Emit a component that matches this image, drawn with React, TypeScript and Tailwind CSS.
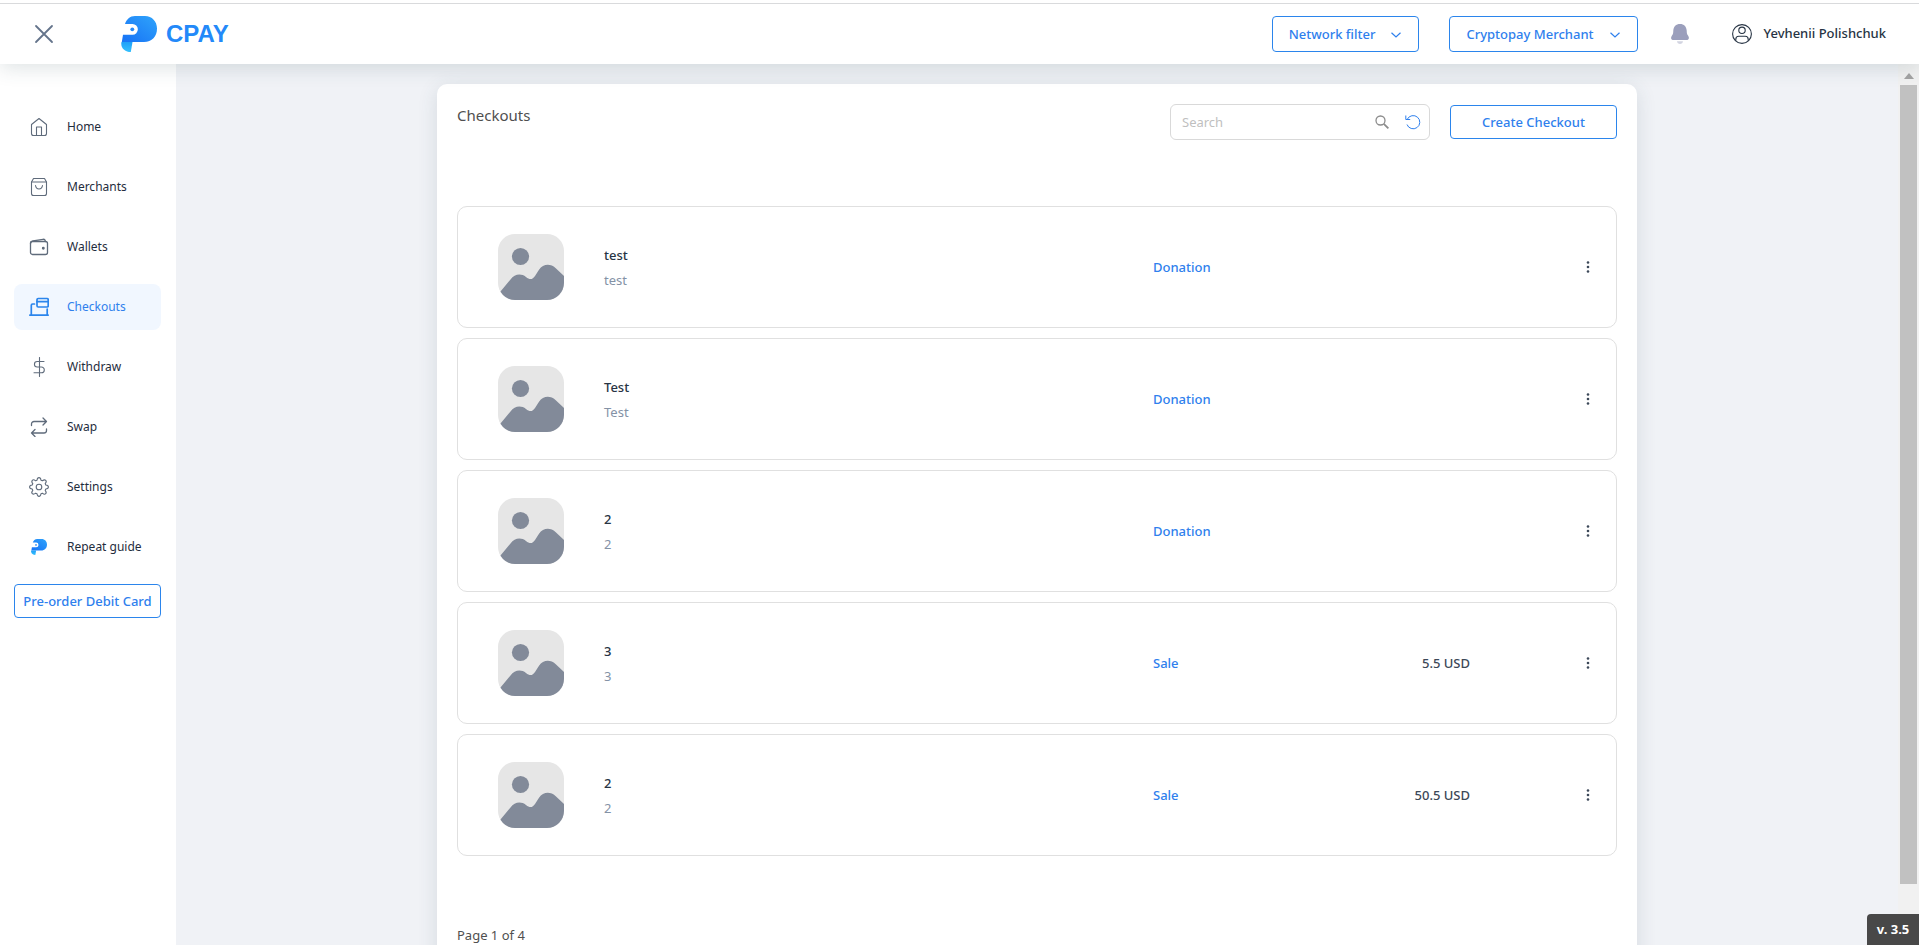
import type { ReactNode } from "react";

const checkouts = [
  { title: "test", description: "test", type: "Donation", price: "" },
  { title: "Test", description: "Test", type: "Donation", price: "" },
  { title: "2", description: "2", type: "Donation", price: "" },
  { title: "3", description: "3", type: "Sale", price: "5.5 USD" },
  { title: "2", description: "2", type: "Sale", price: "50.5 USD" },
];

function LineIcon({ children, width = 1.1 }: { children: ReactNode; width?: number }) {
  return (
    <svg
      className="size-5 shrink-0"
      viewBox="0 0 20 20"
      fill="none"
      stroke="currentColor"
      strokeWidth={width}
      strokeLinecap="round"
      strokeLinejoin="round"
      aria-hidden="true"
    >
      {children}
    </svg>
  );
}

function HomeIcon() {
  return (
    <LineIcon>
      <path d="M2.500 7.500 10 1.500 17.500 7.500v9a2 2 0 0 1-2 2h-11a2 2 0 0 1-2-2z" />
      <path d="M7.500 18.500v-8.500h5v8.500" />
    </LineIcon>
  );
}

function BagIcon() {
  return (
    <LineIcon>
      <path d="M2.500 5 4.500 1.500h11L17.500 5v11.500a2 2 0 0 1-2 2h-11a2 2 0 0 1-2-2z" />
      <path d="M2.500 5h15M6.500 8.500c.4 2.400 1.700 3.500 3.500 3.500s3.100-1.100 3.500-3.500" />
    </LineIcon>
  );
}

function WalletIcon() {
  return (
    <LineIcon width={1.3}>
      <rect x="1.500" y="4.500" width="17" height="13" rx="2" />
      <path d="M1.500 6.500c0-2 .8-2.400 2.500-2.700l10-1.500c1.300-.2 2 .3 2.200 1.400l.1.800" />
      <circle cx="14.300" cy="11.300" r=".8" fill="currentColor" />
    </LineIcon>
  );
}

function CheckoutIcon() {
  return (
    <LineIcon width={1.7}>
      <path d="M.8 18.200h18.400M2.300 18V8.300a1.300 1.300 0 0 1 1.300-1.300H5.500M18.200 18v-6" />
      <rect x="8" y="1.500" width="11.200" height="8.500" rx="1.200" />
      <path d="M8 4.700h11" />
    </LineIcon>
  );
}

function DollarIcon() {
  return (
    <LineIcon>
      <path d="M10.500.5v19M15 4.500H8.200a2.750 2.750 0 0 0 0 5.500h4.200a2.900 2.900 0 0 1 0 5.800H5" />
    </LineIcon>
  );
}

function SwapIcon() {
  return (
    <LineIcon width={1.3}>
      <path d="M2.500 8.500V7A2.500 2.500 0 0 1 5 4.500h12.500M14 1l3.500 3.500L14 8" />
      <path d="M17.500 12v1.500A2.500 2.500 0 0 1 15 16H2.500M6 12.500 2.500 16 6 19.500" />
    </LineIcon>
  );
}

function GearIcon() {
  return (
    <LineIcon width={1.1}>
      <path d="M8 3.200C8.200 1.600 8.700.6 10 .6s1.800 1 2 2.600l1.400.6c1.300-1 2.400-1.300 3.300-.5s.6 2-.5 3.300l.6 1.400c1.600.2 2.600.7 2.600 2s-1 1.800-2.600 2l-.6 1.400c1.100 1.300 1.300 2.400.5 3.300s-2 .6-3.300-.5l-1.400.6c-.2 1.600-.7 2.600-2 2.600s-1.800-1-2-2.600l-1.400-.6c-1.300 1.100-2.400 1.300-3.300.5s-.6-2 .5-3.300L3.200 12C1.600 11.800.6 11.300.6 10s1-1.800 2.600-2l.6-1.400c-1.100-1.300-1.300-2.400-.5-3.300s2-.6 3.300.5z" />
      <circle cx="10" cy="10" r="2.800" />
    </LineIcon>
  );
}

function ParrotMark({ id, className }: { id: string; className: string }) {
  return (
    <svg className={className} viewBox="0 0 36 36" aria-hidden="true">
      <defs>
        <linearGradient id={id + "-body"} x1="0" y1="1" x2="1" y2="0">
          <stop offset="0.1" stopColor="#1976f6" />
          <stop offset="1" stopColor="#2fa4fb" />
        </linearGradient>
        <linearGradient id={id + "-tail"} x1="0" y1="0" x2="0" y2="1">
          <stop offset="0" stopColor="#1fa0f8" />
          <stop offset="1" stopColor="#35c0fd" />
        </linearGradient>
      </defs>
      <path
        fill={"url(#" + id + "-body)"}
        d="M4 8C5.500 3.500 9 0 14 0h10c7 0 12 5.500 12 12.500C36 20.500 31 26 23 26H.8L2 18.700h9.500a5.200 5.200 0 0 0 0-10.700z"
      />
      <circle cx="11.300" cy="13.300" r="1.900" fill="#2488f8" />
      <path fill={"url(#" + id + "-tail)"} d="M.5 26h11L9.800 36C4 36-.8 32 .5 26z" />
    </svg>
  );
}

const navItems = [
  { label: "Home", icon: <HomeIcon /> },
  { label: "Merchants", icon: <BagIcon /> },
  { label: "Wallets", icon: <WalletIcon /> },
  { label: "Checkouts", icon: <CheckoutIcon />, active: true },
  { label: "Withdraw", icon: <DollarIcon /> },
  { label: "Swap", icon: <SwapIcon /> },
  { label: "Settings", icon: <GearIcon /> },
  {
    label: "Repeat guide",
    icon: (
      <span className="flex size-5 items-center justify-center">
        <ParrotMark id="guide" className="size-4" />
      </span>
    ),
  },
];

function Chevron() {
  return (
    <svg className="size-3" viewBox="0 0 12 12" fill="none" stroke="currentColor" strokeWidth="1.200" aria-hidden="true">
      <path d="m1.500 3.800 4.500 4.200 4.500-4.200" />
    </svg>
  );
}

function HeaderDropdown({ label }: { label: string }) {
  return (
    <button
      type="button"
      className="flex h-9 items-center gap-[15px] rounded-[4px] border border-[#2b85ec] bg-white px-4 pt-px text-[13px] font-medium text-[#2f80ed]"
    >
      {label}
      <Chevron />
    </button>
  );
}

function Header() {
  return (
    <header className="relative z-10 flex h-[61px] shrink-0 items-center justify-between border-t border-[#d9dadc] bg-white pr-[33px] pl-8 shadow-[0_4px_20px_rgba(50,80,90,0.16)] before:absolute before:inset-x-0 before:-top-1 before:h-[3px] before:bg-white">
      <div className="flex items-center gap-[65px]">
        <button type="button" aria-label="Close menu" className="flex size-6 items-center justify-center text-[#64748b]">
          <svg className="size-5" viewBox="0 0 20 20" stroke="currentColor" strokeWidth="1.800" strokeLinecap="round" aria-hidden="true">
            <path d="m2 2 16 16M18 2 2 18" />
          </svg>
        </button>
        <a href="#home" className="flex items-center gap-[9px]">
          <ParrotMark id="brand" className="size-9" />
          <span className="font-['Liberation_Sans',sans-serif] text-2xl leading-8 font-bold text-[#2389f9]">CPAY</span>
        </a>
      </div>
      <div className="flex items-center">
        <div className="flex items-center gap-[30px]">
          <HeaderDropdown label="Network filter" />
          <HeaderDropdown label="Cryptopay Merchant" />
        </div>
        <button type="button" aria-label="Notifications" className="ml-8 text-[#9b9fbc]">
          <svg className="size-5" viewBox="0 0 20 20" fill="currentColor" aria-hidden="true">
            <path d="M10 0c4 0 6.500 2.700 6.700 6.500.1 2.500.2 3.500 1.300 5 1.700 2.400.8 4.500-1.500 4.500h-13c-2.300 0-3.200-2.100-1.500-4.500 1.100-1.500 1.200-2.500 1.300-5C3.500 2.700 6 0 10 0z" />
            <path d="M7 17.300h6c-.3 1.700-1.400 2.700-3 2.700s-2.700-1-3-2.700z" opacity="0.45" />
          </svg>
        </button>
        <button type="button" className="ml-[42px] flex items-center gap-3 text-[13px] font-medium text-[#273444]">
          <svg className="size-5" viewBox="0 0 20 20" fill="none" stroke="currentColor" strokeWidth="1.100" aria-hidden="true">
            <circle cx="10" cy="10" r="9.400" />
            <circle cx="10" cy="6.300" r="3.200" />
            <path d="M3.800 16.800v-1.600c0-1.900 1.200-3 3-3h6.400c1.800 0 3 1.100 3 3v1.600" />
          </svg>
          Yevhenii Polishchuk
        </button>
      </div>
    </header>
  );
}

function Sidebar() {
  return (
    <aside className="w-44 shrink-0 bg-white px-[14px] pt-10">
      <nav className="flex flex-col gap-[14px]">
        {navItems.map((item) => (
          <a
            key={item.label}
            href={"#" + item.label.toLowerCase().replace(" ", "-")}
            aria-current={item.active ? "page" : undefined}
            className={
              item.active
                ? "mr-px flex h-[46px] items-center gap-[18px] rounded-lg bg-[#f1f7ff] pl-[15px] text-xs text-[#2f80ed]"
                : "mr-px flex h-[46px] items-center gap-[18px] rounded-lg pl-[15px] text-xs text-[#1f2d3d]"
            }
          >
            <span className={item.active ? "text-[#2b85ec]" : "text-[#5f6b7b]"}>{item.icon}</span>
            {item.label}
          </a>
        ))}
        <button
          type="button"
          className="mr-px h-[34px] rounded-[4px] border border-[#2b85ec] pt-px text-[13px] font-medium whitespace-nowrap text-[#2f80ed]"
        >
          Pre-order Debit Card
        </button>
      </nav>
    </aside>
  );
}

function Thumbnail() {
  return (
    <svg className="size-[66px] shrink-0" viewBox="0 0 66 66" role="img" aria-label="No image">
      <clipPath id="thumb">
        <rect width="66" height="66" rx="17" />
      </clipPath>
      <g clipPath="url(#thumb)">
        <path fill="#e6e6e6" d="M0 0h66v66H0z" />
        <g fill="#828a99">
          <circle cx="22.500" cy="22.500" r="8.600" />
          <path d="M0 60.500 12.500 45.500c4-5.500 10.500-6.500 15.500-2.500 3.700 3 6.500 2.800 9-1l4-6.200c4-6.200 11.500-6.600 16.500-1.800L66 42v24H0z" />
        </g>
      </g>
    </svg>
  );
}

function CheckoutRow({ item }: { item: (typeof checkouts)[number] }) {
  return (
    <li className="flex items-center rounded-[10px] border border-[#e0e0e0] py-[27px] pr-[18px] pl-10 text-[13px]">
      <Thumbnail />
      <div className="ml-10 flex-1 pt-0.5 leading-[25px]">
        <p className="font-medium text-[#273444]">{item.title}</p>
        <p className="text-[#8492a6]">{item.description}</p>
      </div>
      <p className="w-40 pt-0.5 font-medium text-[#2f80ed]">{item.type}</p>
      <p className="w-[157px] pt-0.5 text-right font-medium text-[#3c4858]">{item.price}</p>
      <button type="button" aria-label="Checkout actions" className="ml-[108px] text-[#3c4858]">
        <svg className="size-5" viewBox="0 0 20 20" fill="currentColor" aria-hidden="true">
          <circle cx="10" cy="5.500" r="1.300" />
          <circle cx="10" cy="10" r="1.300" />
          <circle cx="10" cy="14.500" r="1.300" />
        </svg>
      </button>
    </li>
  );
}

function SearchBox() {
  return (
    <div className="flex h-9 w-[260px] items-center rounded-md border border-[#d9d9d9] pr-2 pl-[11px]">
      <input
        type="search"
        aria-label="Search"
        placeholder="Search"
        className="min-w-0 flex-1 bg-transparent pt-px text-[13px] text-[#273444] outline-none placeholder:text-[#bfbfbf]"
      />
      <button type="button" aria-label="Run search" className="text-[#8c8c8c]">
        <svg className="size-[14px]" viewBox="0 0 14 14" fill="none" stroke="currentColor" strokeWidth="1.300" aria-hidden="true">
          <circle cx="5.500" cy="5.500" r="4.500" />
          <path d="m8.800 8.800 4.600 4.600" strokeWidth="1.800" />
        </svg>
      </button>
      <button type="button" aria-label="Reset search" className="ml-4 text-[#2f80ed]">
        <svg className="size-4" viewBox="0 0 16 16" fill="none" stroke="currentColor" strokeWidth="1" aria-hidden="true">
          <path d="M2.300 5.200A6.600 6.600 0 1 1 2 10.500" />
          <path d="M.8 1.500v4h4.400" />
        </svg>
      </button>
    </div>
  );
}

export default function App() {
  return (
    <div className="flex h-screen flex-col overflow-hidden bg-[#f0f2f6] pt-[3px] font-['Noto_Sans',sans-serif]">
      <Header />
      <div className="flex min-h-0 flex-1">
        <Sidebar />
        <main className="min-w-0 flex-1 overflow-hidden px-5 pt-5">
          <section className="mx-auto max-w-[1200px] rounded-t-[10px] bg-white px-5 pt-5 pb-10 shadow-[0_4px_20px_rgba(50,80,90,0.14)]">
            <div className="flex items-start justify-between">
              <h1 className="text-[15px] leading-[22px] text-[#4f4f4f]">Checkouts</h1>
              <div className="flex items-center gap-5">
                <SearchBox />
                <button
                  type="button"
                  className="h-[34px] w-[167px] rounded-[4px] border border-[#2b85ec] pt-px text-[13px] font-medium text-[#2f80ed]"
                >
                  Create Checkout
                </button>
              </div>
            </div>
            <ul className="mt-[66px] flex flex-col gap-[10px]">
              {checkouts.map((item, index) => (
                <CheckoutRow key={index} item={item} />
              ))}
            </ul>
            <p className="mt-[68px] text-[13px] leading-[22px] text-[#4f4f4f]">Page 1 of 4</p>
          </section>
        </main>
        <div className="flex w-[21px] shrink-0 flex-col bg-[#f1f1f1]" aria-hidden="true">
          <div className="flex h-[21px] items-end justify-center pb-[6px]">
            <svg className="h-[6px] w-[10px]" viewBox="0 0 10 6" fill="#a3a3a3">
              <path d="M5 0 10 6H0z" />
            </svg>
          </div>
          <div className="mx-[2px] mb-[61px] flex-1 bg-[#c1c1c1]" />
        </div>
      </div>
      <div className="fixed right-0 bottom-0 z-20 flex h-[31px] w-[52px] items-center justify-center rounded-tl bg-[#484848] text-[13px] font-bold text-white">
        v. 3.5
      </div>
    </div>
  );
}
